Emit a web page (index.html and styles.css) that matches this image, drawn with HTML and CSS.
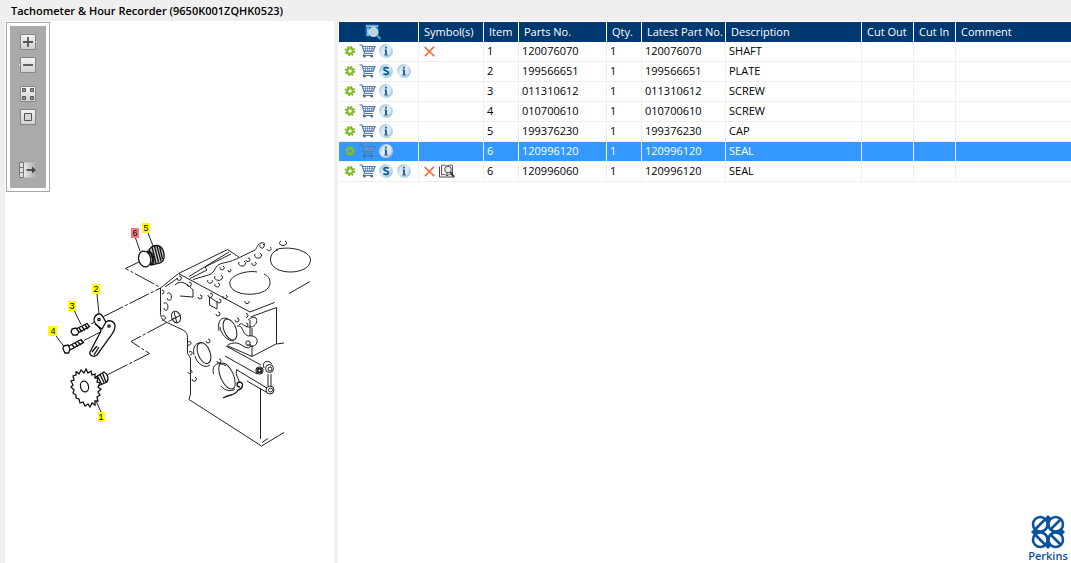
FILE: index.html
```html
<!DOCTYPE html>
<html lang="en">
<head>
  <meta charset="UTF-8">
  <title>Tachometer &amp; Hour Recorder</title>
  <link rel="stylesheet" href="styles.css">
</head>
<body>

  <!-- icon symbols -->
  <svg class="symbols" aria-hidden="true">
    <defs>
      <linearGradient id="key" x1="0" y1="0" x2="0" y2="1">
        <stop offset="0" stop-color="#f4f4f4"/>
        <stop offset="1" stop-color="#cfcfcf"/>
      </linearGradient>
      <linearGradient id="fade" x1="0" y1="0" x2="1" y2="0">
        <stop offset="0" stop-color="#e8e8e8"/>
        <stop offset="1" stop-color="#aaaaaa"/>
      </linearGradient>
      <linearGradient id="ball" x1="0" y1="0" x2="1" y2="1">
        <stop offset="0" stop-color="#8fb6d8"/>
        <stop offset="0.45" stop-color="#dcebf6"/>
        <stop offset="1" stop-color="#8fbadb"/>
      </linearGradient>
    </defs>
    <symbol id="i-gear" viewBox="0 0 12 12">
      <circle cx="6" cy="6" r="4.3" fill="none" stroke="#7cb32a" stroke-width="2" stroke-dasharray="1.7 1.68"/>
      <circle cx="6" cy="6" r="2.8" fill="none" stroke="#86bb30" stroke-width="2.2"/>
    </symbol>
    <symbol id="i-cart" viewBox="0 0 17 14">
      <path d="M0.5 1h2.5l2.5 8.5h8.5M3.5 2.5h12.5l-2 5H5" fill="none" stroke="#5079ad" stroke-width="1.2"/>
      <path d="M4 4.5h11.5M4.5 6.3h10.5M6.5 2.5v5M8.5 2.5v5M10.5 2.5v5M12.5 2.5v5M14 2.5v5" stroke="#6c8fbc" stroke-width="0.8"/>
      <path d="M5.5 9.5l-1.500 2h10" fill="none" stroke="#5079ad"/>
      <circle cx="5.5" cy="12.3" r="1.2" fill="#41699e"/>
      <circle cx="12.7" cy="12.3" r="1.2" fill="#41699e"/>
    </symbol>
    <symbol id="i-info" viewBox="0 0 14 14">
      <circle cx="7" cy="7" r="7" fill="url(#ball)"/>
      <circle cx="7" cy="7" r="5" fill="#e3eff8" opacity="0.6"/>
      <path d="M6 2.8h2v1.7H6zM5.5 5.5H8v5h1v1H5.2v-1H6v-4h-.5z" fill="#2e639c"/>
    </symbol>
    <symbol id="i-super" viewBox="0 0 14 14">
      <circle cx="7" cy="7" r="7" fill="url(#ball)"/>
      <path d="M9.6 4.4C8.6 3.400 5 3 5 5.200c0 2 4.400 1.400 4.400 3.600 0 2.300-3.800 1.900-5 .8" fill="none" stroke="#0c5c96" stroke-width="1.800"/>
    </symbol>
    <symbol id="i-cross" viewBox="0 0 11 11">
      <path d="M0.7 1l9.6 9.3M10 0.7L0.8 10.3" stroke="#f0652d" stroke-width="1.6"/>
    </symbol>
    <symbol id="i-book" viewBox="0 0 16 14">
      <path d="M2.500 1.500c2-.8 4-.5 5.500.8c1.500-1.300 3.500-1.600 5.500-.8v9.500c-2-.8-4-.5-5.500.8c-1.500-1.300-3.500-1.600-5.500-.8z" fill="#f4f4f0" stroke="#555"/>
      <path d="M0.500 2.500v10.500h14.500M8 2.500v9" fill="none" stroke="#444"/>
      <circle cx="9" cy="5.500" r="3.300" fill="#ececec" stroke="#555"/>
      <path d="M11.300 8l3.700 5" stroke="#333" stroke-width="2"/>
    </symbol>
    <symbol id="i-find" viewBox="0 0 17 16">
      <path d="M0.5 0.5h13v12H0.5z" fill="#2076b8"/>
      <path d="M1 2.200h12" stroke="#dceefa"/>
      <path d="M2 4h2v8H2z" fill="#8fc3e6"/>
      <circle cx="8.500" cy="8" r="4.400" fill="#b9d2e3" stroke="#e9f1f7"/>
      <path d="M12 11.500l3.500 3.500" stroke="#4f9bd3" stroke-width="2.200"/>
    </symbol>
  </svg>

  <h1>Tachometer &amp; Hour Recorder (9650K001ZQHK0523)</h1>

  <main class="panes">
    <section class="picture">
      <div class="toolbar">
        <div class="tools">
          <button type="button" aria-label="Zoom in">
            <svg viewBox="0 0 20 16"><path d="M17 5l3 3-3 3z" fill="#e4e4e4" stroke="#8a8a8a" stroke-width="0.6"/><path d="M2.500 0.500h15v15h-15z" fill="url(#key)" stroke="#858585"/><path d="M5 8h10M10 3v10" stroke="#555" stroke-width="1.800"/></svg>
          </button>
          <button type="button" aria-label="Zoom out">
            <svg viewBox="0 0 20 16"><path d="M3 5L0 8l3 3z" fill="#e4e4e4" stroke="#8a8a8a" stroke-width="0.6"/><path d="M2.500 0.500h15v15h-15z" fill="url(#key)" stroke="#858585"/><path d="M5 8h10" stroke="#555" stroke-width="1.800"/></svg>
          </button>
          <button type="button" class="apart" aria-label="Fit picture">
            <svg viewBox="0 0 20 16"><path d="M2.500 0.500h15v15h-15z" fill="url(#key)" stroke="#858585"/><path d="M4.500 2.500h3v3h-3zM12.500 2.500h3v3h-3zM4.500 10.500h3v3h-3zM12.500 10.500h3v3h-3z" fill="#999" stroke="#555"/></svg>
          </button>
          <button type="button" aria-label="Actual size">
            <svg viewBox="0 0 20 16"><path d="M2.500 0.500h15v15h-15z" fill="url(#key)" stroke="#858585"/><path d="M6.500 4.500h7v7h-7z" fill="#d4d4d4" stroke="#555"/></svg>
          </button>
          <button type="button" class="last" aria-label="Hide list">
            <svg viewBox="0 0 20 16"><path d="M6 0.500h12v15H6z" fill="url(#fade)"/><path d="M1.500 0.500h4v15h-4zM1.500 5.500h4M1.500 10.500h4" fill="#e2e2e2" stroke="#777"/><path d="M8.500 8h7" stroke="#444" stroke-width="1.800"/><path d="M14 4.500l4 3.500-4 3.500z" fill="#444"/></svg>
          </button>
        </div>
      </div>

      <svg class="drawing" viewBox="5 192 328 260" role="img" aria-label="Exploded view of parts 1 to 6">
        <!-- cylinder block -->
        <g class="ink">
          <path d="M160.500 288L178.500 273.500L227.500 249.500L239.500 257.500L255 250C257 249 257 244 261 243C264 242 266 244 264 245"/>
          <path d="M178.500 273.500L250 312L274.500 302.500M250.500 317L276.500 307.500V344L284 343M276 344L252 356.500L227 345.500M252 356.500V345"/>
          <path d="M160.500 288V311C160 316 162 320 166 322L182 329.500C187 332 187.500 334 187.500 339V352C187 355 190.500 356 190.500 359V394L189 399.500L261.500 446L284 432.500M260.500 388V439M262 442.500L268 438.500"/>
          <path d="M189 276.500L229 252M190 278.500L207 270L205 267L231 254M193 279.500L205 276C216 274 214 267 219 264.500C224 262 229 263 239.500 257.500M165 287L178 278"/>
          <path d="M289 293.500L310 281.500"/>
          <path d="M276 249.500C292 245 311 252 310.500 260C310 276 271 276 270.500 260C270.500 254 274 251 278 250M257 272C247 270 230 275 229.800 283C229.500 298 269.500 298 270 283C270 278 268 276 264 274"/>
          <path d="M175 285C180 279 188 284 193 290V297L180 296M209.500 297L217 302L217 309L209.500 305Z"/>
        </g>
        <g class="ink hole">
          <path d="M260 245a2.200 2.200 0 1 0 3-1M267 249a2 2 0 1 0 3-2M281 241a3.500 2.500 0 1 0 4 0M255 254a3.500 2.800 0 1 0 5-1M239 262a3.500 2.800 0 1 0 5-1M246 260a2 1.800 0 1 0 2-2M252 263a2.200 1.800 0 1 0 3-1M220 267a2.200 2 0 1 0 3-1M228 270a1.500 1.500 0 1 0 2-1M215 276a4 3 0 1 0 6-1M208 280a2.500 2 0 1 0 4 0M215 284a2.500 2 0 1 0 3-1M223 296a2.200 1.800 0 1 0 3-1M245 301a2.200 1.800 0 1 0 4 0M177 278a2.200 2.200 0 1 0 2-2M187 284a2.200 2.200 0 1 0 2-2M198 297a2 2 0 1 0 2-2M208 295a2.200 2.200 0 1 0 2-2M217 301a2 2 0 1 0 2-2M216 314a2 2 0 1 0 2-2M235 320a2 2 0 1 0 2-2"/>
          <path d="M167 294c3-4 6 3 3.500 6c-1.500 1-3 0-3-2M163.500 304c3-4 6 3 3.500 6c-1.500 1-3 0-3-2"/>
          <path d="M162 290a2 2 0 1 1 0 4M162 316a2.300 2.300 0 1 1 0 4"/>
          <ellipse cx="176" cy="317" rx="4.300" ry="6" transform="rotate(-20 176 317)"/>
          <path d="M177 317l-6 3M174 312l3 11M177 317l4-2"/>
          <ellipse cx="230" cy="329.500" rx="6" ry="11" transform="rotate(-22 230 329.500)"/>
          <path d="M219 331C217 320 222 316 228 319M220 327C221 334 227 341 234 341"/>
          <ellipse cx="204" cy="353" rx="6" ry="11" transform="rotate(-22 204 353)"/>
          <path d="M194 355C192 346 197 342 202 343M195 356C197 364 205 369 210 365"/>
          <ellipse cx="227" cy="376" rx="6.500" ry="14" transform="rotate(-24 227 376)"/>
          <path d="M213.500 374C211 364 219 361 226 366M221 386C225 391 231 392 235 389"/>
          <path d="M206 341a2 2 0 1 0 2-2M217 361a2 2 0 1 0 2-2M188 342c4-2 4 4 0 3M189 352c4-2 4 3 1 3M188 372a2 2 0 1 0 3-2M192 379a2.200 2.200 0 1 0 3-2"/>
        </g>
        <!-- brackets on the block -->
        <g class="ink">
          <path d="M228 344.500C238 341 239 344 245 347C249 349 252 347 250 344M237 326C244 325 241 333 248 336C254 335 258 338 257 342C256 347 251 347 247 345M239 325C242 321 244 328 251 327C256 326 258 321 256 318C253 316 250 319 248 320M250 320V336M252 328V336"/>
          <path d="M246 313.500a2 2 0 1 1 0 4M246 323a2 2 0 1 1 0 4"/><circle cx="248" cy="343" r="2.200"/>
          <path d="M226 346L261 365M225 356L257 374M237 370L267 388M247 381L266 392M268 374V386M271 374V386M264 368C261 360 270 360 272 364M237 369C234 375 240 379 239 383"/>
          <circle cx="259.500" cy="370.500" r="3.700"/><circle cx="259.500" cy="370.500" r="2" stroke-width="2"/>
          <circle cx="269.500" cy="368.500" r="4"/><circle cx="270" cy="369" r="2"/>
          <circle cx="270" cy="390" r="4"/><circle cx="270.500" cy="390" r="2"/>
          <path d="M223 398C231 393 234 397 238 390C243 389 244 383 240 382C236 382 236 387 240 387" stroke-width="1.400"/>
        </g>
        <!-- axes and leaders -->
        <g class="ink axis">
          <path d="M142 260.500L125.500 268.500L160.500 287.500M103.500 316.500L160.500 288M91 324L98 320M84 340.500L108 328M108 374.500L149.500 353.500L131 341.500L177 317"/>
        </g>
        <g class="ink">
          <path d="M135.500 238L140 251M148 233L153 246M97 294L99 314M74.500 311L81 324.500M56 336L64 346.500M96 401L101 412"/>
        </g>
        <!-- seal and cap -->
        <g class="ink bold">
          <path d="M149 250C153 244 160 244 163 250C165 256 164 261 160 263L151 265C157 260 153 252 147 251" fill="#ccc"/>
          <path d="M152 247l4 16M154.500 246l4 16M157 246l4 15M159.500 246l3 13M149 249l5 14M148 252c6 3 6 9 2 13"/>
          <ellipse cx="144.700" cy="259" rx="6" ry="8" transform="rotate(-14 144.700 259)" fill="#fff"/>
        </g>
        <!-- plate -->
        <g class="ink bold">
          <path d="M99 314C103 313 103 319 106 322C110 319 115 322 115 326C115 331 112 334 110 337L97 355C93 358 89 355 90 352L101 331C100 326 93 324 94 319C95 316 97 314 99 314Z" fill="#fff"/>
          <path d="M92 352L97 346M94 355L99 347M95 324L102 329L106 322"/>
          <circle cx="99" cy="319.500" r="1.200"/><circle cx="109" cy="326" r="1.200"/>
        </g>
        <!-- screws -->
        <g class="ink bold">
          <path d="M72 329L76 328L79 332L77 335L73 335L71 332ZM76 329L87 323.500L89.500 326.500L78 333"/>
          <path d="M79 328l3 4M82 326.500l3 4M85 325l3 4"/>
          <path d="M63.500 346L68 345L70 349L68.500 353L65 353L63 349ZM69 346L81 339.500L83.500 342.500L70 350"/>
          <path d="M72 345l3 3M75 343l3 3.500M78 342l3 3M81 340l2 3"/>
        </g>
        <!-- drive shaft -->
        <g class="ink bold">
          <path d="M94 378L104 372C108 374 109 379 107 382L98 386M95 377l4 8M97.500 376l4 8M100 374.500l4 8M102.500 373l3.500 9"/>
          <path fill="#fff" d="M77 372l2 2 2-4 3 3 2-4 2 4 3-2 1 4 3-1 0 4 3 0-1 4 3 1-2 4 3 2-3 3 2 3-3 2 1 4-3 0 0 4-3-2-2 4-2-3-3 2-2-4-3 1-1-4-3-1 0-3-3-2 1-3-3-3 2-2-2-4 3-1-1-4 3-1 0-3z"/>
          <ellipse cx="84.500" cy="386.500" rx="4" ry="5.500" transform="rotate(-14 84.500 386.500)"/>
        </g>
        <!-- callouts -->
        <g class="callout">
          <rect class="picked" x="131" y="228" width="8" height="10"/><text x="135" y="236">6</text>
          <rect x="142" y="223" width="8" height="10"/><text x="146" y="231">5</text>
          <rect x="92" y="284" width="8" height="10"/><text x="96" y="292">2</text>
          <rect x="68" y="301" width="8" height="10"/><text x="72" y="309">3</text>
          <rect x="48" y="326" width="9" height="10"/><text x="53" y="334">4</text>
          <rect x="98" y="412" width="7" height="10"/><text x="101" y="420">1</text>
        </g>
      </svg>
    </section>

    <section class="list">
      <table>
        <colgroup>
          <col class="c-tools"><col class="c-symbols"><col class="c-item"><col class="c-parts"><col class="c-qty">
          <col class="c-latest"><col class="c-desc"><col class="c-out"><col class="c-in"><col>
        </colgroup>
        <thead>
          <tr>
            <th class="find"><button type="button" aria-label="Find in list"><svg width="17" height="16"><use href="#i-find"/></svg></button></th>
            <th>Symbol(s)</th>
            <th>Item</th>
            <th>Parts No.</th>
            <th>Qty.</th>
            <th>Latest Part No.</th>
            <th>Description</th>
            <th>Cut Out</th>
            <th>Cut In</th>
            <th>Comment</th>
          </tr>
        </thead>
        <tbody id="parts"></tbody>
      </table>

      <div class="logo">
        <svg width="34" height="34" viewBox="0 0 34 34" aria-hidden="true">
          <g fill="none" stroke="#0b529c" stroke-width="2.600">
            <circle cx="9.300" cy="9.300" r="7.300"/><circle cx="24.700" cy="9.300" r="7.300"/>
            <circle cx="9.300" cy="24.700" r="7.300"/><circle cx="24.700" cy="24.700" r="7.300"/>
            <path d="M4 14.500L14.500 4M19.500 14.500L30 4M4 19.500L14.500 30M19.500 19.500L30 30"/>
          </g>
          <path d="M17 0l3 3-3 3-3-3zM17 28l3 3-3 3-3-3zM0 17l3-3 3 3-3 3zM28 17l3-3 3 3-3 3z" fill="#0b529c"/>
        </svg>
        <span>Perkins</span>
      </div>
    </section>
  </main>

  <script>
    // item, part no, qty, latest part no, description, superseded, symbols
    const parts = [
      [1, '120076070', 1, '120076070', 'SHAFT', false, ['cross']],
      [2, '199566651', 1, '199566651', 'PLATE', true, []],
      [3, '011310612', 1, '011310612', 'SCREW', false, []],
      [4, '010700610', 1, '010700610', 'SCREW', false, []],
      [5, '199376230', 1, '199376230', 'CAP', false, []],
      [6, '120996120', 1, '120996120', 'SEAL', false, []],
      [6, '120996060', 1, '120996120', 'SEAL', true, ['cross', 'book']]
    ];
    const selected = 5;
    const sizes = { gear: [12, 12], cart: [17, 14], info: [14, 14], super: [14, 14], cross: [11, 11], book: [16, 14] };
    const labels = { gear: 'Options', cart: 'Add to cart', info: 'Information', super: 'Supersession' };

    function icon(name) {
      const [w, h] = sizes[name];
      return `<svg width="${w}" height="${h}"><use href="#i-${name}"/></svg>`;
    }

    function tool(name) {
      return `<button type="button" class="${name}" aria-label="${labels[name]}">${icon(name)}</button>`;
    }

    document.getElementById('parts').innerHTML = parts.map((p, i) => {
      const tools = p[5] ? ['gear', 'cart', 'super', 'info'] : ['gear', 'cart', 'info'];
      return `
        <tr class="${i === selected ? 'selected' : ''}">
          <td><div class="icons">${tools.map(tool).join('')}</div></td>
          <td><div class="icons">${p[6].map(icon).join('')}</div></td>
          <td>${p[0]}</td><td>${p[1]}</td><td>${p[2]}</td><td>${p[3]}</td><td>${p[4]}</td>
          <td></td><td></td><td></td>
        </tr>`;
    }).join('');
  </script>
</body>
</html>
```
FILE: styles.css
```css
* {
  box-sizing: border-box;
}
body {
  margin: 0;
  min-height: 100vh;
  display: flex;
  flex-direction: column;
  background: #efefef;
  color: #000;
  font-family: "Open Sans", "Noto Sans", sans-serif;
  font-size: 11px;
}
.symbols {
  position: absolute;
  width: 0;
  height: 0;
}
h1 {
  margin: 0;
  padding-left: 11px;
  height: 21px;
  line-height: 21px;
  font-size: 11px;
  font-weight: 600;
}
button {
  display: block;
  padding: 0;
  border: 0;
  background: none;
  cursor: pointer;
}
svg {
  display: block;
}

/* two panes */
.panes {
  flex: 1;
  display: flex;
  gap: 4px;
  padding-left: 5px;
}
.picture {
  flex: none;
  width: 329px;
  background: #fff;
}
.list {
  flex: 1;
  min-width: 0;
  display: flex;
  flex-direction: column;
  justify-content: space-between;
  padding: 1px 0 0 1px;
  background: #fff;
}

/* picture tools */
.toolbar {
  width: 44px;
  margin: 1px 0 0 1px;
  padding: 3px;
  border: 1px solid #a9a9a9;
}
.tools {
  display: flex;
  flex-direction: column;
  align-items: center;
  gap: 7px;
  height: 162px;
  padding: 8px 0 10px;
  background: #aaa;
}
.tools svg {
  width: 20px;
  height: 16px;
}
.tools .apart {
  margin-top: 6px;
}
.tools .last {
  margin-top: auto;
}

/* drawing */
.drawing {
  width: 328px;
  height: 260px;
}
.ink {
  fill: none;
  stroke: #222;
  stroke-width: 1;
}
.bold {
  stroke: #111;
  stroke-width: 1.3;
}
.axis {
  stroke-dasharray: 22 2 3 2;
}
.callout rect {
  fill: #ff0;
}
.callout .picked {
  fill: #f47c7c;
}
.callout text {
  font-family: "Liberation Sans", Arial, sans-serif;
  font-size: 9px;
  text-anchor: middle;
}

/* parts table */
table {
  width: 100%;
  table-layout: fixed;
  border-collapse: separate;
  border-spacing: 0;
}
.c-tools { width: 80px; }
.c-symbols { width: 65px; }
.c-item { width: 35px; }
.c-parts { width: 88px; }
.c-qty { width: 35px; }
.c-latest { width: 84px; }
.c-desc { width: 136px; }
.c-out { width: 52px; }
.c-in { width: 42px; }
th,
td {
  height: 20px;
  padding: 0 0 0 3px;
  border-right: 1px solid #efefef;
  line-height: 18px;
  text-align: left;
  vertical-align: top;
  white-space: nowrap;
}
th {
  padding-left: 5px;
  border-color: #fff;
  background: #003870;
  color: #fff;
  font-weight: 400;
  line-height: 20px;
}
td {
  border-bottom: 1px solid #efefef;
}
th:last-child,
td:last-child {
  border-right: 0;
}
.find {
  padding: 2px 0 0;
}
.find button {
  margin: 0 auto;
  padding-right: 10px;
}
.selected td {
  background: #39f;
  color: #fff;
}
.icons {
  display: flex;
  align-items: center;
  gap: 4px;
  height: 18px;
  padding-left: 2px;
}
.icons .cart {
  margin: 0 -1px 0 -1px;
}

/* logo */
.logo {
  align-self: flex-end;
  display: flex;
  flex-direction: column;
  align-items: center;
  width: 46px;
  color: #0b529c;
  font-size: 11px;
  font-weight: 600;
  line-height: 14px;
}
```
